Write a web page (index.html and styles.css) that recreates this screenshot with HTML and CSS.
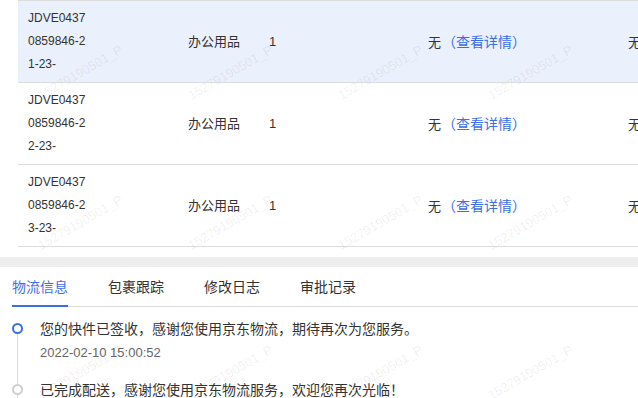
FILE: index.html
```html
<!DOCTYPE html>
<html lang="zh-CN">
<head>
<meta charset="utf-8">
<title>物流信息</title>
<link rel="stylesheet" href="styles.css">
</head>
<body>
<div class="page">
  <div class="table">
    <div class="row row-active">
      <div class="cell cell-code">JDVE04370859846-21-23-</div>
      <div class="cell">办公用品</div>
      <div class="cell">1</div>
      <div class="cell cell-big">无<a class="link">（查看详情）</a></div>
      <div class="cell cell-big">无</div>
    </div>
    <div class="row">
      <div class="cell cell-code">JDVE04370859846-22-23-</div>
      <div class="cell">办公用品</div>
      <div class="cell">1</div>
      <div class="cell cell-big">无<a class="link">（查看详情）</a></div>
      <div class="cell cell-big">无</div>
    </div>
    <div class="row">
      <div class="cell cell-code">JDVE04370859846-23-23-</div>
      <div class="cell">办公用品</div>
      <div class="cell">1</div>
      <div class="cell cell-big">无<a class="link">（查看详情）</a></div>
      <div class="cell cell-big">无</div>
    </div>
  </div>

  <div class="band"></div>

  <div class="tabs">
    <div class="tab tab-active">物流信息</div>
    <div class="tab">包裹跟踪</div>
    <div class="tab">修改日志</div>
    <div class="tab">审批记录</div>
  </div>

  <div class="timeline">
    <div class="tl-item">
      <div class="tl-axis"><span class="dot dot-active"></span><span class="tl-line"></span></div>
      <div class="tl-body">
        <div class="tl-text">您的快件已签收，感谢您使用京东物流，期待再次为您服务。</div>
        <div class="tl-time">2022-02-10 15:00:52</div>
      </div>
    </div>
    <div class="tl-item">
      <div class="tl-axis"><span class="dot"></span><span class="tl-line"></span></div>
      <div class="tl-body">
        <div class="tl-text">已完成配送，感谢您使用京东物流服务，欢迎您再次光临！</div>
        <div class="tl-time">2022-02-10 14:12:08</div>
      </div>
    </div>
  </div>

  <div class="watermark">
    <span>15279190501_P</span><span>15279190501_P</span><span>15279190501_P</span><span>15279190501_P</span><span>15279190501_P</span>
    <span>15279190501_P</span><span>15279190501_P</span><span>15279190501_P</span><span>15279190501_P</span><span>15279190501_P</span>
    <span>15279190501_P</span><span>15279190501_P</span><span>15279190501_P</span><span>15279190501_P</span><span>15279190501_P</span>
  </div>
</div>
</body>
</html>
```

FILE: styles.css
```css
* { box-sizing: border-box; }

html, body {
  margin: 0;
  padding: 0;
  background: #fff;
}

body {
  font-family: "Liberation Sans", "Noto Sans CJK SC", sans-serif;
  color: #333;
}

.page {
  position: relative;
  width: 638px;
  height: 398px;
  overflow: hidden;
}

/* ---------- table ---------- */
.table {
  margin-left: 18px;
  width: 700px;
  border-top: 1px solid #dcdcdc;
}

.row {
  display: grid;
  grid-template-columns: 170px 81px 159px 200px 90px;
  height: 82px;
  border-bottom: 1px solid #dcdcdc;
  align-items: center;
  font-size: 13px;
}

.row-active {
  background: #eaf0fc;
}

.cell {
  line-height: 22px;
  white-space: nowrap;
}

.cell-code {
  padding-left: 10px;
  font-size: 12px;
  line-height: 23px;
  white-space: normal;
  width: 70px;
  word-break: break-all;
}

.cell-big {
  font-size: 13px;
  padding-top: 2px;
}

.link {
  color: #3b6ee8;
  font-size: 14px;
  margin-left: 1px;
}

/* ---------- band ---------- */
.band {
  margin-top: 10px;
  height: 10px;
  background: #eeeeee;
}

/* ---------- tabs ---------- */
.tabs {
  display: flex;
  gap: 40px;
  margin-left: 12px;
  border-bottom: 1px solid #dcdcdc;
  height: 40px;
}

.tab {
  position: relative;
  font-size: 14px;
  line-height: 20px;
  padding-top: 10px;
  width: 56px;
  white-space: nowrap;
  color: #333;
}

.tab-active {
  color: #3b6ee8;
}

.tab-active::after {
  content: "";
  position: absolute;
  left: 0;
  right: 0;
  bottom: -1px;
  height: 2px;
  background: #3b6ee8;
}

/* ---------- timeline ---------- */
.timeline {
  padding-top: 12px;
  padding-left: 12px;
}

.tl-item {
  display: flex;
  margin-bottom: 17px;
}

.tl-axis {
  position: relative;
  width: 28px;
  flex: none;
}

.dot {
  display: block;
  width: 11px;
  height: 11px;
  margin-top: 4px;
  border-radius: 50%;
  border: 2.5px solid #cfcfcf;
  background: #fff;
  position: relative;
  z-index: 1;
}

.dot-active {
  border-color: #3b6ee8;
}

.tl-line {
  position: absolute;
  left: 5px;
  top: 15px;
  width: 1px;
  height: 75px;
  background: #dcdcdc;
}

.tl-text {
  font-size: 14px;
  line-height: 20px;
  color: #333;
  white-space: nowrap;
}

.tl-time {
  margin-top: 4px;
  font-size: 13px;
  line-height: 20px;
  color: #666;
}

/* ---------- watermark ---------- */
.watermark {
  position: absolute;
  left: 5px;
  top: -3px;
  display: grid;
  grid-template-columns: repeat(5, 150px);
  grid-auto-rows: 150px;
  pointer-events: none;
  z-index: 5;
}

.watermark span {
  display: flex;
  align-items: center;
  justify-content: center;
  font-size: 13px;
  color: rgba(0, 0, 0, 0.07);
  transform: rotate(-30deg);
  white-space: nowrap;
}
```
